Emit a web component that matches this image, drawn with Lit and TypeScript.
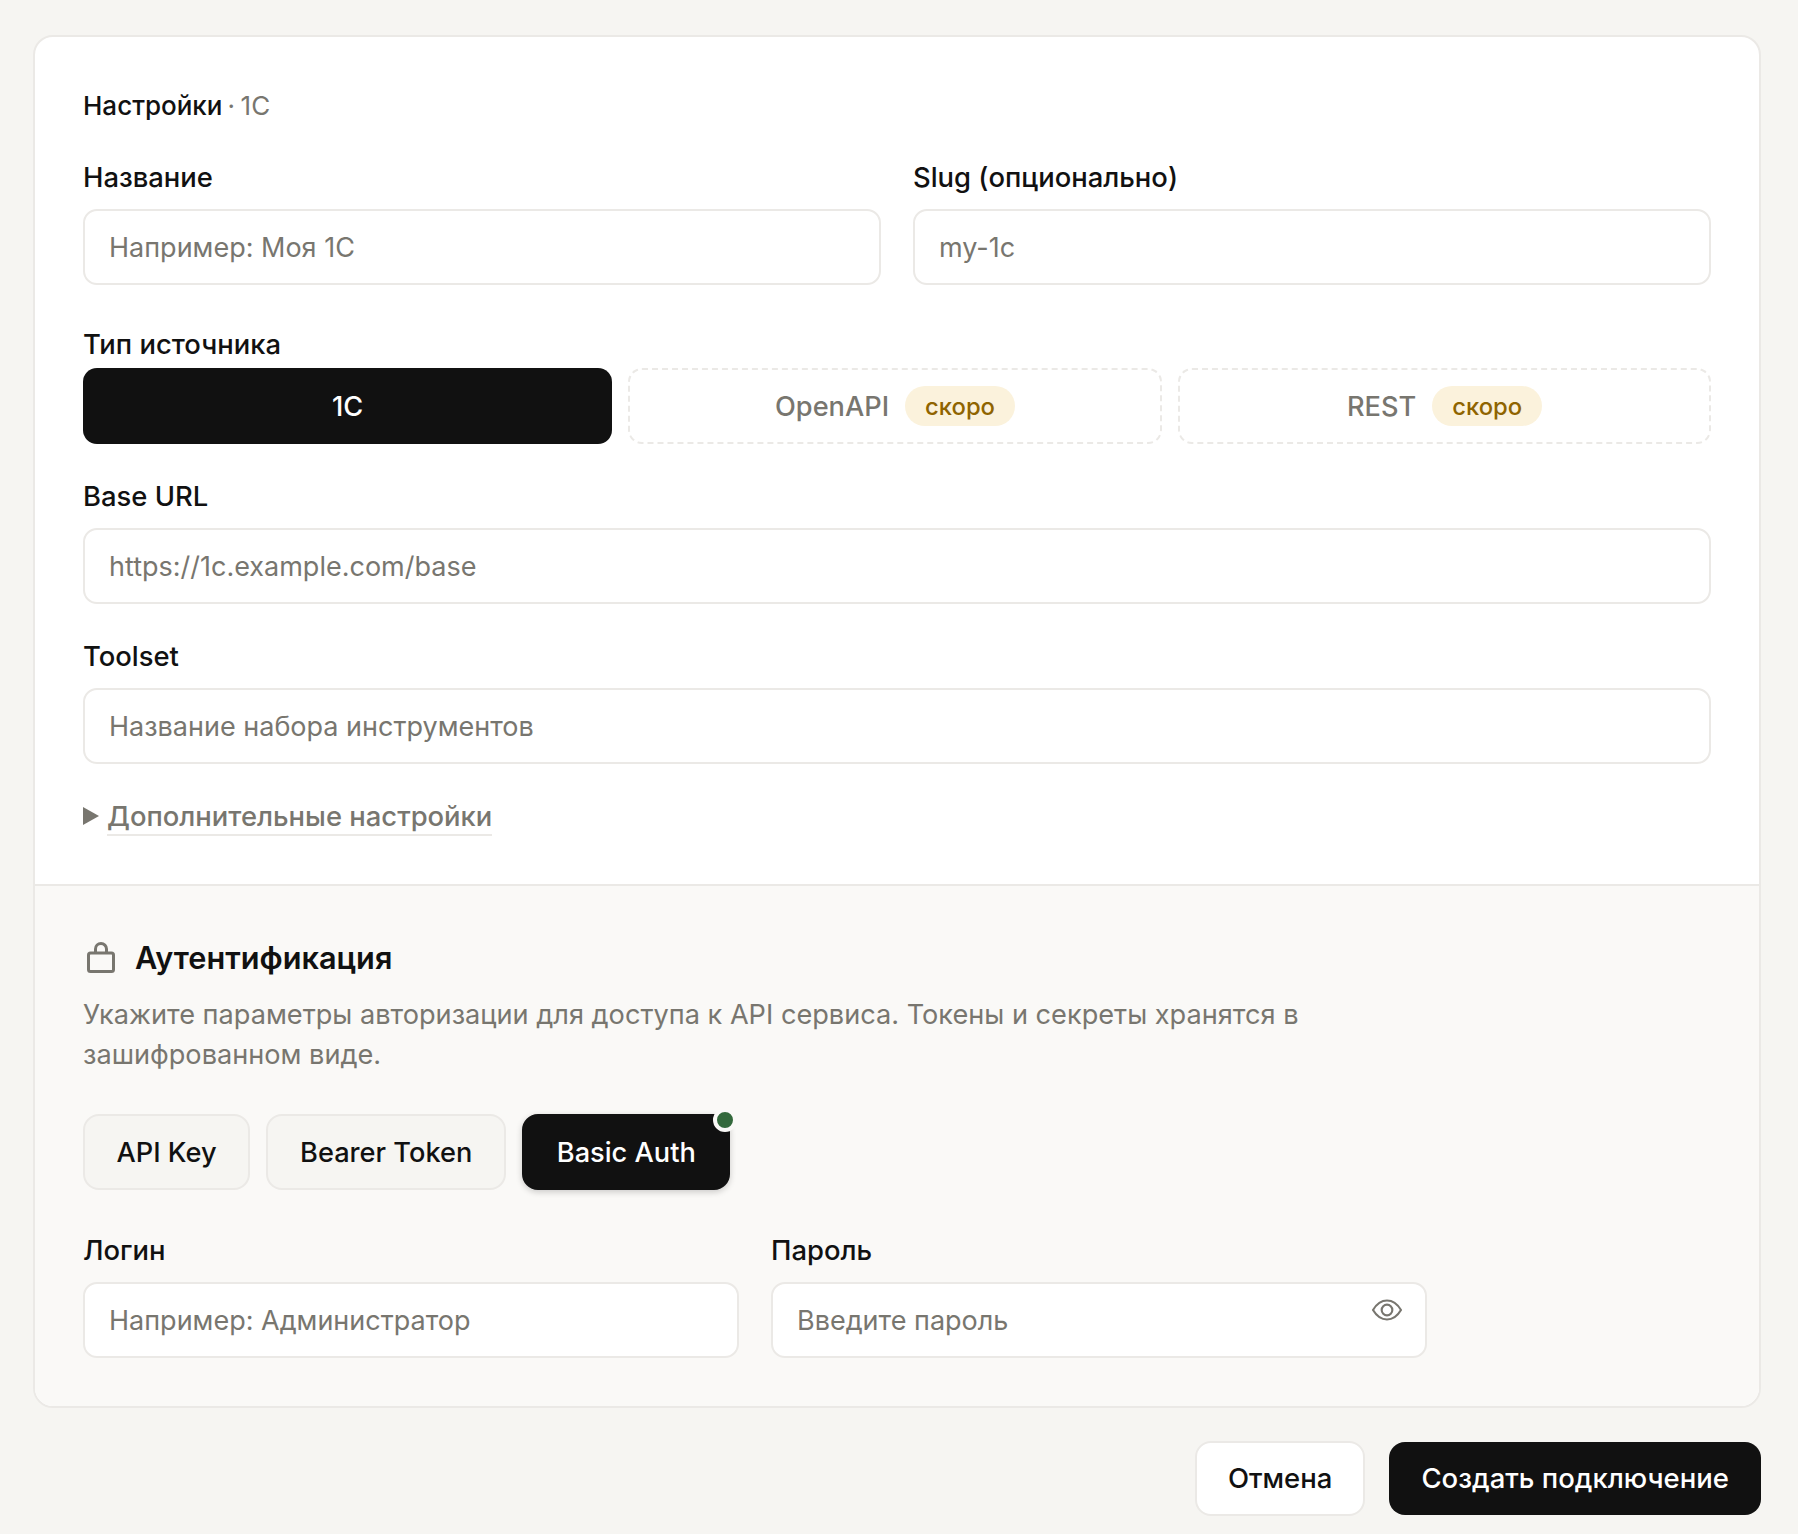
import { html, css, LitElement } from 'lit';
import { customElement } from 'lit/decorators.js';

@customElement('app-root')
export class AppRoot extends LitElement {

  static styles = [css`
    :host {
      display: block;
      min-height: 1534px;
      box-sizing: border-box;
      padding: 35px 37px 18px 33px;
      background: #f6f5f2;
      color: #111111;
      font-family: Inter, "Noto Sans", sans-serif;
      font-size: 27px;
    }

    * {
      box-sizing: border-box;
    }

    .card {
      background: #ffffff;
      border: 2px solid #ebe9e6;
      border-radius: 20px;
      overflow: hidden;
    }

    .main {
      padding: 49px 48px 48px 48px;
    }

    .heading {
      font-size: 26px;
      line-height: 40px;
      font-weight: 500;
      word-spacing: -1.8px;
      margin-bottom: 31px;
    }

    .heading span {
      color: #78766f;
      font-weight: 400;
    }

    .row {
      display: grid;
      grid-template-columns: 1fr 1fr;
      gap: 32px;
      margin-bottom: 39px;
    }

    .field {
      display: block;
      margin-bottom: 32px;
    }

    .row .field, .creds .field {
      margin-bottom: 0;
    }

    .label {
      display: block;
      font-size: 27.4px;
      line-height: 40px;
      font-weight: 500;
      margin-bottom: 12px;
    }

    .label.tight {
      margin-bottom: 4px;
    }

    input {
      display: block;
      width: 100%;
      height: 76px;
      padding: 0 24px;
      background: #ffffff;
      border: 2px solid #ebe9e6;
      border-radius: 14px;
      font-family: inherit;
      font-size: 27px;
      color: #111111;
      outline: none;
    }

    input::placeholder {
      color: #78766f;
      opacity: 1;
    }

    .types {
      display: grid;
      grid-template-columns: 529fr 534fr 533fr;
      gap: 16px;
      margin-bottom: 32px;
    }

    .type {
      display: flex;
      align-items: center;
      justify-content: center;
      gap: 16px;
      height: 76px;
      border-radius: 14px;
      font-size: 27.2px;
      font-weight: 500;
      color: #78766f;
      border: 2px dashed #ebe9e6;
    }

    .type.active {
      background: #111111;
      border: none;
      color: #ffffff;
    }

    .soon {
      display: inline-flex;
      align-items: center;
      height: 40px;
      padding: 0 20px;
      border-radius: 20px;
      background: #fbf2dc;
      color: #8f6400;
      font-size: 23.8px;
    }

    .more {
      display: flex;
      align-items: center;
      gap: 8px;
      color: #78766f;
      font-size: 27.4px;
      font-weight: 500;
      height: 40px;
    }

    .more .arrow {
      width: 16px;
      height: 18px;
    }

    .more span {
      border-bottom: 2px solid #ebe9e6;
      line-height: 36px;
      padding-top: 1px;
    }

    .auth {
      background: #faf9f7;
      border-top: 2px solid #ebe9e6;
      padding: 50px 48px 48px 48px;
    }

    .auth-title {
      display: flex;
      align-items: center;
      gap: 16px;
      font-size: 30.7px;
      line-height: 44px;
      font-weight: 600;
      margin-bottom: 15px;
    }

    .auth-title svg {
      width: 36px;
      height: 36px;
      color: #78766f;
    }

    .desc {
      color: #78766f;
      font-size: 27.15px;
      line-height: 40px;
      max-width: 1240px;
      margin: 0 0 39px;
    }

    .tabs {
      display: flex;
      gap: 16px;
      margin-bottom: 40px;
    }

    .tab {
      position: relative;
      display: flex;
      align-items: center;
      height: 76px;
      padding: 0 32px;
      border: 2px solid #ebe9e6;
      border-radius: 16px;
      background: #f6f5f2;
      font-size: 27.2px;
      font-weight: 500;
    }

    .tab:first-child {
      padding: 0 31.5px;
    }

    .tab.active {
      padding: 0 32.5px;
      background: #111111;
      border-color: #111111;
      color: #ffffff;
      box-shadow: 0 2px 6px rgba(17, 17, 17, 0.2);
    }

    .tab .dot {
      position: absolute;
      top: -8px;
      right: -9px;
      width: 24px;
      height: 24px;
      border-radius: 50%;
      background: #33693c;
      border: 4px solid #faf9f7;
    }

    .creds {
      display: grid;
      grid-template-columns: 656px 656px;
      gap: 32px;
    }

    .password {
      position: relative;
    }

    .password svg {
      position: absolute;
      top: 12px;
      right: 24px;
      width: 32px;
      height: 32px;
      color: #78766f;
    }

    .actions {
      display: flex;
      justify-content: flex-end;
      align-items: center;
      gap: 24px;
      margin-top: 33px;
    }

    button {
      height: 75px;
      border-radius: 16px;
      font-family: inherit;
      font-size: 27.5px;
      font-weight: 500;
      padding: 0 31px 2px;
      border: 2px solid #ebe9e6;
      background: #ffffff;
      color: #111111;
    }

    button.primary {
      height: 73px;
      padding: 0 32px 2px;
      background: #111111;
      border: none;
      color: #ffffff;
    }
  `]

  render() {
    return html`
      <div class="card">
        <div class="main">
          <div class="heading">Настройки <span>· 1C</span></div>
          <div class="row">
            <label class="field">
              <span class="label">Название</span>
              <input placeholder="Например: Моя 1С">
            </label>
            <label class="field">
              <span class="label">Slug (опционально)</span>
              <input placeholder="my-1c">
            </label>
          </div>
          <span class="label tight">Тип источника</span>
          <div class="types">
            <div class="type active">1C</div>
            <div class="type">OpenAPI <span class="soon">скоро</span></div>
            <div class="type">REST <span class="soon">скоро</span></div>
          </div>
          <label class="field">
            <span class="label">Base URL</span>
            <input placeholder="https://1c.example.com/base">
          </label>
          <label class="field">
            <span class="label">Toolset</span>
            <input placeholder="Название набора инструментов">
          </label>
          <div class="more">
            <svg class="arrow" viewBox="0 0 16 18"><path d="M0 0L16 9L0 18Z" fill="currentColor"/></svg>
            <span>Дополнительные настройки</span>
          </div>
        </div>
        <div class="auth">
          <div class="auth-title">
            <svg viewBox="0 0 36 36" fill="none" stroke="currentColor" stroke-width="3" stroke-linejoin="round">
              <rect x="5.5" y="13" width="25" height="18.500" rx="2"/>
              <path d="M12.500 13V9a5.500 5.500 0 0 1 11 0V13"/>
            </svg>
            Аутентификация
          </div>
          <p class="desc">Укажите параметры авторизации для доступа к API сервиса. Токены и секреты хранятся в зашифрованном виде.</p>
          <div class="tabs">
            <div class="tab">API Key</div>
            <div class="tab">Bearer Token</div>
            <div class="tab active">Basic Auth<span class="dot"></span></div>
          </div>
          <div class="creds">
            <label class="field">
              <span class="label">Логин</span>
              <input placeholder="Например: Администратор">
            </label>
            <label class="field">
              <span class="label">Пароль</span>
              <div class="password">
                <input placeholder="Введите пароль">
                <svg viewBox="0 0 24 24" fill="none" stroke="currentColor" stroke-width="1.6" stroke-linecap="round" stroke-linejoin="round">
                  <path d="M1.500 12C4.500 7 8 4.900 12 4.900S19.500 7 22.500 12C19.500 17 16 19.100 12 19.100S4.500 17 1.500 12Z"/>
                  <circle cx="12" cy="12" r="4"/>
                </svg>
              </div>
            </label>
          </div>
        </div>
      </div>
      <div class="actions">
        <button>Отмена</button>
        <button class="primary">Создать подключение</button>
      </div>
    `
  }
}
